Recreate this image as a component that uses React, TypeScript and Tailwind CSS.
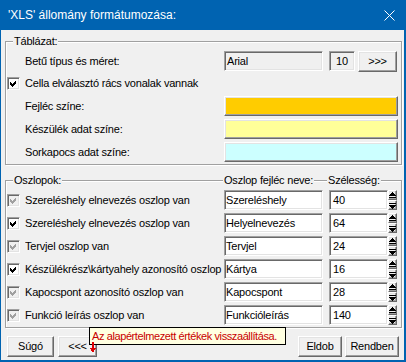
import React from "react";

const sunken =
  "border border-t-[#a0a0a0] border-l-[#a0a0a0] border-b-white border-r-white shadow-[inset_1px_1px_0_#696969,inset_-1px_-1px_0_#e3e3e3]";
const raised =
  "border border-t-white border-l-white border-b-[#696969] border-r-[#696969] shadow-[inset_-1px_-1px_0_#a0a0a0,inset_1px_1px_0_#e3e3e3]";

type Col = { label: string; name: string; width: string; on: boolean; disabled: boolean };

const columns: Col[] = [
  { label: "Szereléshely elnevezés oszlop van", name: "Szereléshely", width: "40", on: true, disabled: true },
  { label: "Szereléshely elnevezés oszlop van", name: "Helyelnevezés", width: "64", on: true, disabled: false },
  { label: "Tervjel oszlop van", name: "Tervjel", width: "24", on: true, disabled: true },
  { label: "Készülékrész\\kártyahely azonosító oszlop", name: "Kártya", width: "16", on: true, disabled: false },
  { label: "Kapocspont azonosító oszlop van", name: "Kapocspont", width: "28", on: true, disabled: true },
  { label: "Funkció leírás oszlop van", name: "Funkcióleírás", width: "140", on: true, disabled: true },
];

const Check: React.FC<{ on: boolean; disabled?: boolean }> = ({ on, disabled }) => (
  <span
    className={`w-[13px] h-[13px] shrink-0 flex items-center justify-center ${sunken} ${
      disabled ? "bg-[#f0f0f0]" : "bg-white"
    }`}
  >
    {on && (
      <svg width="7" height="7" viewBox="0 0 7 7" shapeRendering="crispEdges">
        <path d="M0 2L2 4L6 0V3L2 7L0 5Z" fill={disabled ? "#a0a0a0" : "#000"} />
      </svg>
    )}
  </span>
);

const Spin: React.FC = () => (
  <div className="w-[9px] h-[20px] flex flex-col">
    <div className={`h-[10px] bg-[#f0f0f0] flex items-center justify-center ${raised}`}>
      <svg width="7" height="7" viewBox="0 0 7 7" shapeRendering="crispEdges">
        <path d="M3.5 0L7 4H0Z" fill="#000" />
        <rect x="0" y="5" width="7" height="1" fill="#000" />
      </svg>
    </div>
    <div className={`h-[10px] bg-[#f0f0f0] flex items-center justify-center ${raised}`}>
      <svg width="7" height="7" viewBox="0 0 7 7" shapeRendering="crispEdges">
        <rect x="0" y="1" width="7" height="1" fill="#000" />
        <path d="M0 3H7L3.5 7Z" fill="#000" />
      </svg>
    </div>
  </div>
);

const Button: React.FC<{ w: string; children: React.ReactNode }> = ({ w, children }) => (
  <div className={`${w} h-[21px] bg-[#f0f0f0] flex items-center justify-center ${raised}`}>{children}</div>
);

export default function App() {
  return (
    <div className="w-[406px] h-[362px] flex flex-col bg-[#0063b1] pl-px pr-[2px] pb-[2px] font-['Liberation_Sans',Arial,sans-serif] text-black">
      {/* title bar */}
      <div className="h-[30px] shrink-0 flex items-center pl-[7px] pr-[8px] text-white text-[12px]">
        <span className="flex-1">'XLS' állomány formátumozása:</span>
        <svg width="11" height="11" viewBox="0 0 11 11" className="mr-[1px]">
          <path d="M0.5 0.5L10.5 10.5M10.5 0.5L0.5 10.5" stroke="#fff" strokeWidth="1" />
        </svg>
      </div>

      <div className="flex-1 relative bg-[#f0f0f0] flex flex-col text-[11px] tracking-[-0.2px]">
        {/* Táblázat */}
        <div className={`relative mt-[11px] ml-[4px] w-[397px] pt-[9px] pb-[2px] pr-[3px] flex flex-col border border-[#a0a0a0] shadow-[inset_1px_1px_0_#fff,1px_1px_0_#fff]`}>
          <span className="absolute -top-[7px] left-[7px] px-px leading-[13px] bg-[#f0f0f0]">Táblázat:</span>
          <div className="h-[20px] flex items-center pl-[19px]">
            <span className="w-[199px]">Betű típus és méret:</span>
            <div className={`w-[99px] h-[20px] pl-[2px] flex items-center bg-[#f0f0f0] ${sunken}`}>Arial</div>
            <div className={`ml-[6px] w-[26px] h-[20px] flex items-center justify-center bg-[#f0f0f0] ${sunken}`}>10</div>
            <div className="ml-[3px]">
              <Button w="w-[39px]">&gt;&gt;&gt;</Button>
            </div>
          </div>
          <div className="h-[25px] flex items-center pl-px gap-[5px]">
            <Check on />
            <span>Cella elválasztó rács vonalak vannak</span>
          </div>
          <div className="flex flex-col gap-[3px] pl-[19px]">
            {[
              ["Fejléc színe:", "bg-[#ffcc00]"],
              ["Készülék adat színe:", "bg-[#ffff99]"],
              ["Sorkapocs adat színe:", "bg-[#ccffff]"],
            ].map(([label, bg]) => (
              <div key={label} className="h-[20px] flex items-center">
                <span className="w-[199px]">{label}</span>
                <div className={`w-[174px] h-[20px] ${bg} ${raised}`} />
              </div>
            ))}
          </div>
        </div>

        {/* Oszlopok */}
        <div className={`relative mt-[15px] ml-[4px] w-[397px] pt-[9px] pb-[2px] flex flex-col gap-[3px] border border-[#a0a0a0] shadow-[inset_1px_1px_0_#fff,1px_1px_0_#fff]`}>
          <span className="absolute -top-[7px] left-[7px] px-px leading-[13px] bg-[#f0f0f0]">Oszlopok:</span>
          <span className="absolute -top-[7px] left-[217px] px-px leading-[13px] bg-[#f0f0f0]">Oszlop fejléc neve:</span>
          <span className="absolute -top-[7px] left-[321px] px-px leading-[13px] bg-[#f0f0f0]">Szélesség:</span>
          {columns.map((c, i) => (
            <div key={i} className="h-[20px] flex items-center pl-px">
              <Check on={c.on} disabled={c.disabled} />
              <span className="ml-[5px] w-[199px] whitespace-nowrap overflow-hidden">{c.label}</span>
              <div className={`w-[99px] h-[20px] pl-px flex items-center bg-white ${sunken}`}>{c.name}</div>
              <div className={`ml-[6px] w-[59px] h-[20px] pl-[3px] flex items-center bg-white ${sunken}`}>{c.width}</div>
              <Spin />
            </div>
          ))}
        </div>

        {/* buttons */}
        <div className="mt-[8px] flex items-center pl-[6px] pr-[5px]">
          <Button w="w-[47px]">Súgó</Button>
          <div className="ml-[4px]">
            <Button w="w-[39px]">&lt;&lt;&lt;</Button>
          </div>
          <div className="flex-1" />
          <Button w="w-[44px]">Eldob</Button>
          <div className="ml-[3px]">
            <Button w="w-[54px]">Rendben</Button>
          </div>
        </div>

        {/* tooltip */}
        <div className="absolute left-[88px] top-[297px] w-[197px] h-[18px] pl-[2px] flex items-center whitespace-nowrap overflow-hidden tracking-[-0.4px] bg-[#ffffe1] border border-black text-[#c80000]">
          Az alapértelmezett értékek visszaállítása.
        </div>
        <svg width="6" height="11" viewBox="0 0 6 11" className="absolute left-[89px] top-[312px]" shapeRendering="crispEdges">
          <rect x="2" y="0" width="2" height="6" fill="#e00000" />
          <path d="M0 6H6L3 11Z" fill="#e00000" />
        </svg>
      </div>
    </div>
  );
}
